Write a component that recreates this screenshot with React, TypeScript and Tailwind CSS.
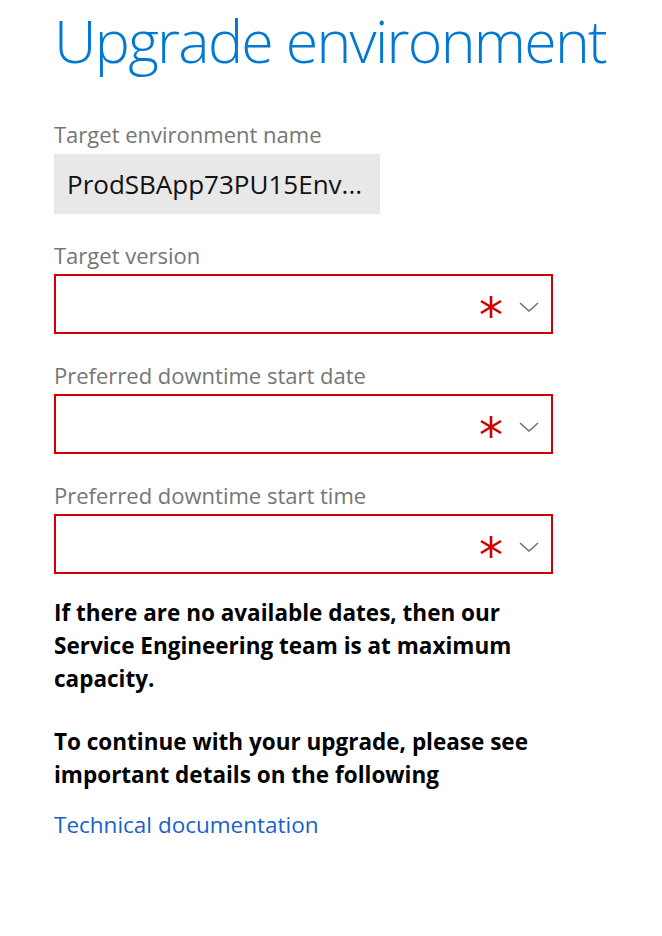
import React from 'react';

const Asterisk: React.FC = () => (
  <svg width="22" height="22" viewBox="0 0 22 22" className="shrink-0">
    <g stroke="#d10000" strokeWidth="2.6" strokeLinecap="butt">
      <line x1="11" y1="0" x2="11" y2="22" />
      <line x1="1" y1="5" x2="21" y2="17" />
      <line x1="1" y1="17" x2="21" y2="5" />
    </g>
  </svg>
);

const Chevron: React.FC = () => (
  <svg width="20" height="10" viewBox="0 0 20 10" className="shrink-0">
    <polyline points="1,1 10,9 19,1" fill="none" stroke="#6e6e6e" strokeWidth="1.5" />
  </svg>
);

const RequiredSelect: React.FC<{ label: string }> = ({ label }) => (
  <div className="mt-[27px]">
    <div className="text-[22px] leading-[28px] text-[#767676]">{label}</div>
    <div className="mt-[5px] flex h-[60px] w-[499px] items-center justify-end gap-[17px] border-2 border-[#d10000] pr-[12px] pt-[6px]">
      <Asterisk />
      <Chevron />
    </div>
  </div>
);

const App: React.FC = () => {
  return (
    <div className="min-h-[936px] bg-white pl-[54px] font-['Open_Sans','Noto_Sans',sans-serif]">
      <h1 className="whitespace-nowrap text-[59px] font-light leading-[80px] tracking-[-1.7px] text-[#0078d4]">
        Upgrade environment
      </h1>

      <div className="mt-[40px]">
        <div className="text-[22px] leading-[28px] text-[#767676]">Target environment name</div>
        <div className="mt-[6px] flex h-[60px] w-[326px] items-center bg-[#e8e8e8] px-[13px] text-[26px] text-[#111]">
          ProdSBApp73PU15Env...
        </div>
      </div>

      <RequiredSelect label="Target version" />
      <RequiredSelect label="Preferred downtime start date" />
      <RequiredSelect label="Preferred downtime start time" />

      <div className="mt-[22px] w-[490px] text-[22.5px] font-bold leading-[33px] text-black">
        <p>If there are no available dates, then our Service Engineering team is at maximum capacity.</p>
        <p className="mt-[30px]">To continue with your upgrade, please see important details on the following</p>
      </div>

      <a href="#" className="mt-[19px] block text-[22.5px] leading-[30px] text-[#1a5fc8]">
        Technical documentation
      </a>
    </div>
  );
};

export default App;
